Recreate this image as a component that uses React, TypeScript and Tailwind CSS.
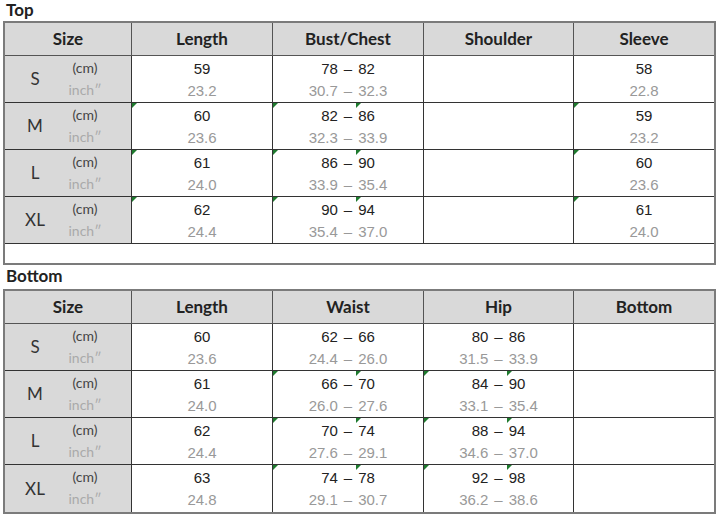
import React from 'react';

type Row = { size: string; cells: [string, string][] };

const head = "font-['Lato','DejaVu_Sans',sans-serif]";
const num = "font-['Liberation_Sans','Arial',sans-serif]";

const cols = 'grid grid-cols-[127px_141px_151px_150px_140px]';

const topRows: Row[] = [
  { size: 'S', cells: [['59', '23.2'], ['78 – 82', '30.7 – 32.3'], ['', ''], ['58', '22.8']] },
  { size: 'M', cells: [['60', '23.6'], ['82 – 86', '32.3 – 33.9'], ['', ''], ['59', '23.2']] },
  { size: 'L', cells: [['61', '24.0'], ['86 – 90', '33.9 – 35.4'], ['', ''], ['60', '23.6']] },
  { size: 'XL', cells: [['62', '24.4'], ['90 – 94', '35.4 – 37.0'], ['', ''], ['61', '24.0']] },
];

const bottomRows: Row[] = [
  { size: 'S', cells: [['60', '23.6'], ['62 – 66', '24.4 – 26.0'], ['80 – 86', '31.5 – 33.9'], ['', '']] },
  { size: 'M', cells: [['61', '24.0'], ['66 – 70', '26.0 – 27.6'], ['84 – 90', '33.1 – 35.4'], ['', '']] },
  { size: 'L', cells: [['62', '24.4'], ['70 – 74', '27.6 – 29.1'], ['88 – 94', '34.6 – 37.0'], ['', '']] },
  { size: 'XL', cells: [['63', '24.8'], ['74 – 78', '29.1 – 30.7'], ['92 – 98', '36.2 – 38.6'], ['', '']] },
];

// green excel error marker in a cell's top-left corner
function Mark({ left }: { left: number }) {
  return (
    <span
      className="absolute top-0 w-0 h-0 border-t-[5px] border-r-[5px] border-t-[#1e7a2e] border-r-transparent"
      style={{ left }}
    />
  );
}

// ranges get a bit more air round the dash, like the sheet
function Value({ text, className }: { text: string; className: string }) {
  const parts = text.split(' – ');
  if (parts.length < 2) return <span className={`h-[22px] ${className}`}>{text}</span>;
  return (
    <span className={`flex h-[22px] gap-[6px] ${className}`}>
      <span>{parts[0]}</span>
      <span>–</span>
      <span>{parts[1]}</span>
    </span>
  );
}

function SizeTable({
  headers,
  rows,
  marks,
  blank,
}: {
  headers: string[];
  rows: Row[];
  marks: [number, number][];
  blank?: boolean;
}) {
  return (
    <div className="ml-[3px] w-[713px] border-2 border-[#7b7b7b]">
      <div className={`${cols} h-[33px] bg-[#d9d9d9] border-b border-[#555]`}>
        {headers.map((h, i) => (
          <div
            key={h}
            className={`flex items-center justify-center text-[17px] font-bold text-[#222] ${head} ${i < 4 ? 'border-r border-[#555]' : ''}`}
          >
            {h}
          </div>
        ))}
      </div>
      {rows.map((r, ri) => (
        <div
          key={r.size}
          className={`${cols} h-[47px] ${ri < rows.length - 1 || blank ? 'border-b border-[#333]' : ''}`}
        >
          <div className="flex bg-[#d9d9d9] border-r border-[#333]">
            <div className={`w-[60px] flex items-center justify-center text-[17px] text-[#333] ${head}`}>{r.size}</div>
            <div className={`flex flex-col items-center w-[40px] pt-[1px] text-[14px] leading-[22px] ${head}`}>
              <span className="text-[#444]">(cm)</span>
              <span className="text-[#aaa]">inch″</span>
            </div>
          </div>
          {r.cells.map((c, ci) => (
            <div
              key={ci}
              className={`relative flex flex-col items-center pt-[2px] text-[15px] leading-[22px] ${num} ${ci < 3 ? 'border-r border-[#333]' : ''}`}
            >
              {ri > 0 && marks.filter((m) => m[0] === ci).map((m) => <Mark key={m[1]} left={m[1]} />)}
              <Value text={c[0]} className="text-[#222]" />
              <Value text={c[1]} className="text-[#999]" />
            </div>
          ))}
        </div>
      ))}
      {blank && <div className="h-[19px]" />}
    </div>
  );
}

export default function App() {
  return (
    <div className="w-[720px] h-[514px] bg-white overflow-hidden">
      <div className={`h-[21px] pl-[6px] text-[17px] leading-[20px] font-bold text-[#222] ${head}`}>Top</div>
      <SizeTable
        headers={['Size', 'Length', 'Bust/Chest', 'Shoulder', 'Sleeve']}
        rows={topRows}
        marks={[[0, 0], [1, 0], [1, 83], [3, 0]]}
        blank
      />
      <div className={`h-[24px] pl-[6px] pt-[1px] text-[17px] leading-[20px] font-bold text-[#222] ${head}`}>Bottom</div>
      <SizeTable
        headers={['Size', 'Length', 'Waist', 'Hip', 'Bottom']}
        rows={bottomRows}
        marks={[[1, 0], [1, 83], [2, 0], [2, 83]]}
      />
    </div>
  );
}
